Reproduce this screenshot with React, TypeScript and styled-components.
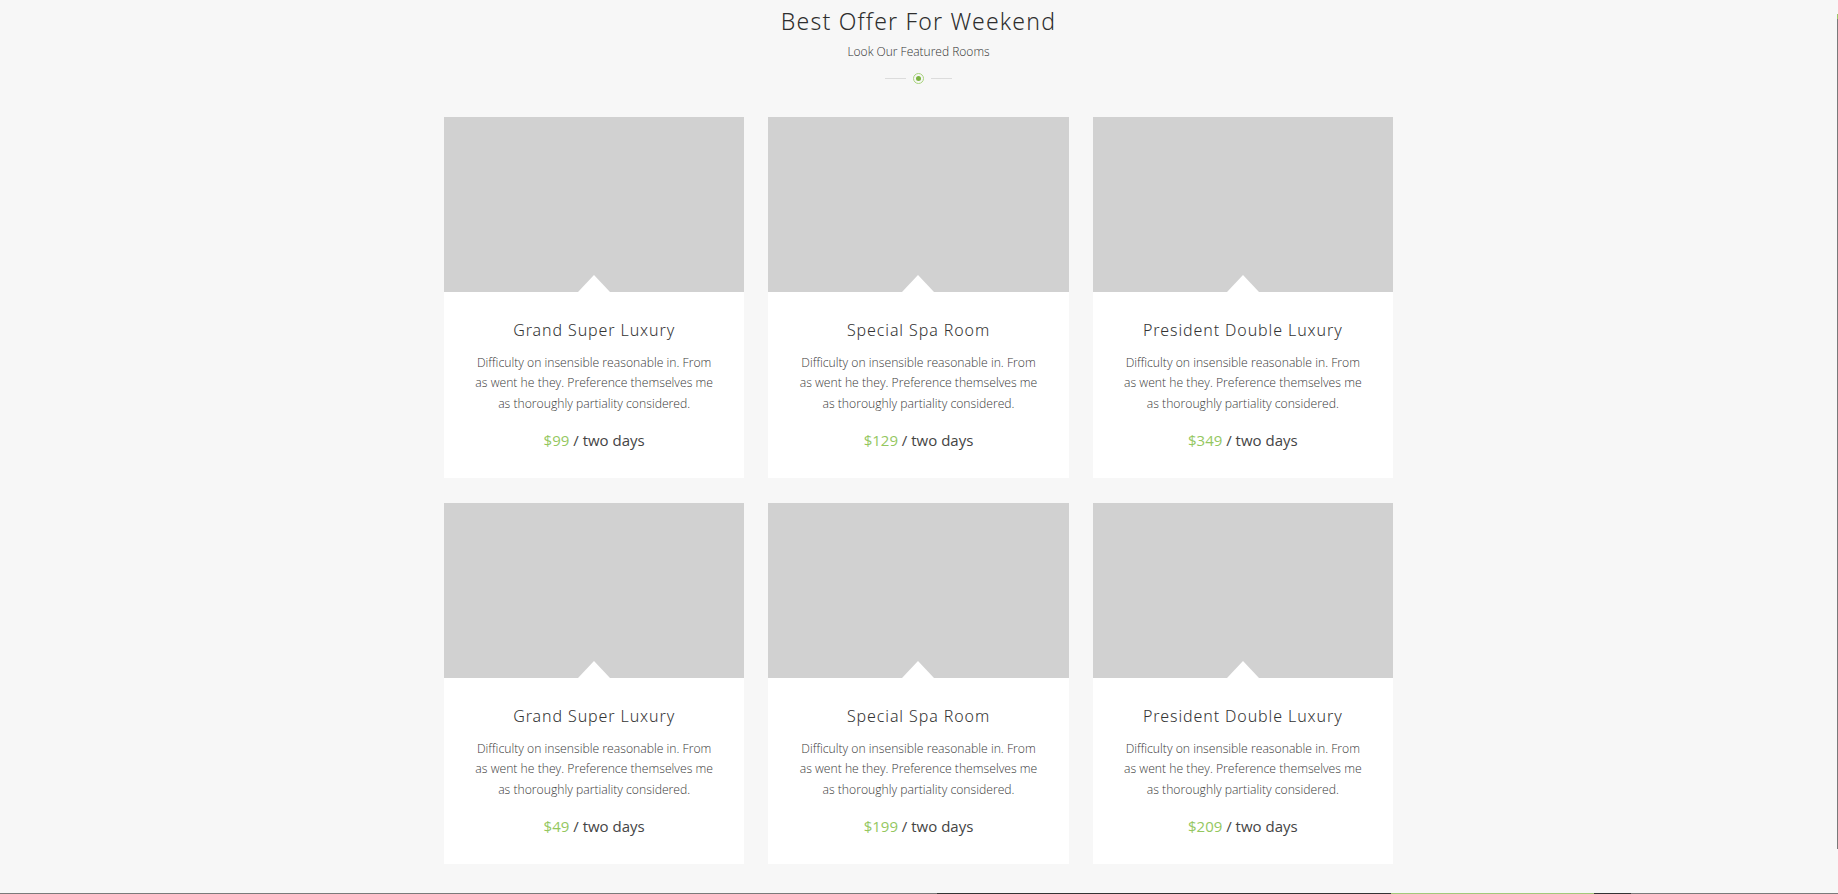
import React from 'react';
import styled, { createGlobalStyle } from 'styled-components';

const GlobalStyle = createGlobalStyle`
	html, body {
		margin: 0;
		padding: 0;
		background: #f7f7f7;
	}
	* {
		box-sizing: border-box;
	}
`;

const Section = styled.section`
	padding: 6px 1px 29px 0;
	font-family: 'Open Sans', 'Noto Sans', sans-serif;
	color: #444;
`;

const Heading = styled.div`
	display: flex;
	flex-direction: column;
	align-items: center;
	margin-bottom: 33px;

	.heading-title {
		margin: 0;
		font-family: 'Noto Sans', 'DejaVu Sans', sans-serif;
		font-size: 23px;
		font-weight: 300;
		line-height: 30px;
		letter-spacing: 1.2px;
		color: #2e2e2e;
	}

	.heading-sub {
		margin: 7px 0 0;
		font-size: 12px;
		font-weight: 300;
		line-height: 18px;
		color: #333;
	}
`;

const Divider = styled.div`
	display: flex;
	align-items: center;
	gap: 7px;
	margin-top: 12px;
	height: 11px;

	&::before,
	&::after {
		content: '';
		width: 21px;
		height: 1px;
		background: #dcdcdc;
	}
`;

const Dot = styled.span`
	width: 11px;
	height: 11px;
	border-radius: 50%;
	border: 1.5px solid #a9d47c;
	display: flex;
	align-items: center;
	justify-content: center;

	&::after {
		content: '';
		width: 5px;
		height: 5px;
		border-radius: 50%;
		background: #7cb342;
	}
`;

const Grid = styled.div`
	display: grid;
	width: 949px;
	margin: 0 auto;
	grid-template-columns: repeat(3, 1fr);
	gap: 25px 24px;
`;

const Card = styled.article`
	background: #fff;
	height: 361px;
	display: flex;
	flex-direction: column;
`;

const Thumb = styled.div`
	position: relative;
	height: 175px;
	background: #d1d1d1;

	&::after {
		content: '';
		position: absolute;
		left: 50%;
		bottom: 0;
		transform: translateX(-50%);
		border-left: 16px solid transparent;
		border-right: 16px solid transparent;
		border-bottom: 17px solid #fff;
	}
`;

const Body = styled.div`
	padding: 27px 6px 27px;
	text-align: center;

	.card-title {
		margin: 0;
		font-family: 'Noto Sans', 'DejaVu Sans', sans-serif;
		font-size: 16px;
		font-weight: 300;
		line-height: 22px;
		letter-spacing: 0.9px;
		color: #333;
	}

	.card-text {
		margin: 12px 0 0;
		font-size: 12.2px;
		font-weight: 300;
		line-height: 20.5px;
		color: #3a3a3a;
	}

	.card-price {
		margin: 15px 0 0;
		font-size: 15px;
		line-height: 22px;
		color: #444;
	}
`;

const Price = styled.span`
	color: #94c75f;
`;

const ScrollRail = styled.div`
	position: fixed;
	top: 14px;
	right: 0;
	width: 1px;
	height: 835px;
	background: #7a7a7a;

	&::before {
		content: '';
		display: block;
		height: 5px;
		background: #9cc96b;
	}
`;

const FooterEdge = styled.div`
	height: 1px;
	background: linear-gradient(
		to right,
		#7a7a7a 0,
		#7a7a7a 937px,
		#333 937px,
		#333 1391px,
		#a2c97a 1391px,
		#a2c97a 1594px,
		#333 1594px,
		#333 1631px,
		#7a7a7a 1631px
	);
`;

const rooms = [
	{ name: 'Grand Super Luxury', price: '$99' },
	{ name: 'Special Spa Room', price: '$129' },
	{ name: 'President Double Luxury', price: '$349' },
	{ name: 'Grand Super Luxury', price: '$49' },
	{ name: 'Special Spa Room', price: '$199' },
	{ name: 'President Double Luxury', price: '$209' },
];

function App() {
	return (
		<>
			<GlobalStyle />
			<Section>
				<Heading>
					<h2 className="heading-title">Best Offer For Weekend</h2>
					<p className="heading-sub">Look Our Featured Rooms</p>
					<Divider>
						<Dot />
					</Divider>
				</Heading>
				<Grid>
					{rooms.map((room, i) => (
						<Card key={i}>
							<Thumb />
							<Body>
								<h3 className="card-title">{room.name}</h3>
								<p className="card-text">
									Difficulty on insensible reasonable in. From
									<br />
									as went he they. Preference themselves me
									<br />
									as thoroughly partiality considered.
								</p>
								<p className="card-price">
									<Price>{room.price}</Price> / two days
								</p>
							</Body>
						</Card>
					))}
				</Grid>
			</Section>
			<FooterEdge />
			<ScrollRail />
		</>
	);
}

export default App;
